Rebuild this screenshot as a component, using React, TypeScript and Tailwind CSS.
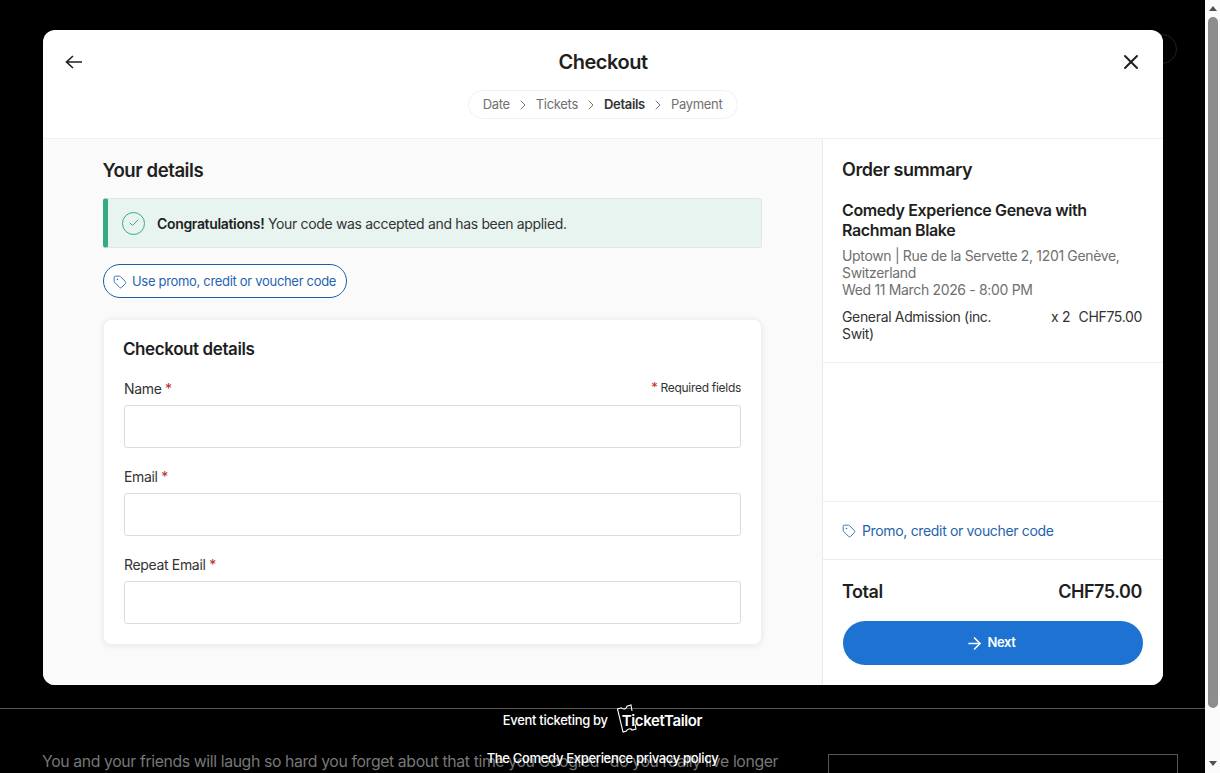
import React from "react";
import { ArrowRight, Check, ChevronRight, Tag, X } from "lucide-react";

const STEPS = ["Date", "Tickets", "Details", "Payment"];

function Field({ label, hint }: { label: string; hint?: boolean }) {
  return (
    <div>
      <div className="flex items-center justify-between h-[22px] mb-[6px]">
        <label className="text-[14px] text-[#333]">
          {label} <span className="text-[#c0272d]">*</span>
        </label>
        {hint && (
          <span className="text-[12px] text-[#333]">
            <span className="text-[13px] leading-none text-[#c0272d]">*</span> Required fields
          </span>
        )}
      </div>
      <input className="block w-full h-[43px] bg-white border border-[#dcdcdc] rounded-[3px]" />
    </div>
  );
}

function Background() {
  return (
    <div className="flex-1 min-w-0 relative overflow-hidden">
      <div className="absolute left-[1147px] top-[34px] size-[30px] rounded-full border border-[#222]" />
      <div className="mt-[708px] border-t border-[#555]" />
      <div className="flex pl-[42px] pr-[27px] pt-[44px] justify-between">
        <p className="text-[15.8px] leading-[18px] text-[#777] whitespace-nowrap">
          You and your friends will laugh so hard you forget about that time you Googled "do you really live longer
        </p>
        <div className="w-[350px] h-[60px] shrink-0 border border-[#555] mt-[1px]" />
      </div>
    </div>
  );
}

function Scrollbar() {
  return (
    <div className="w-[15px] shrink-0 bg-[#fbfbfb] flex flex-col items-center">
      <div className="h-[17px] flex items-center">
        <div className="size-0 border-x-[4px] border-x-transparent border-b-[5px] border-b-[#505050]" />
      </div>
      <div className="w-[10px] h-[691px] rounded-full bg-[#8d8d8d]" />
      <div className="flex-1 flex items-end pb-[7px]">
        <div className="size-0 border-x-[4px] border-x-transparent border-t-[5px] border-t-[#505050]" />
      </div>
    </div>
  );
}

function Header() {
  return (
    <div className="h-[109px] shrink-0 relative border-b border-[#f0f0f0] flex flex-col items-center pt-[19px]">
      <svg viewBox="0 0 18 14" className="absolute left-[22px] top-[25px] w-[18px] h-[14px] text-[#1f1f1f]" fill="none" stroke="currentColor" strokeWidth="1.6">
        <path d="M17 7H1.5M8 1L1.5 7L8 13" />
      </svg>
      <X className="absolute right-[20px] top-[20px] size-[24px] text-[#1f1f1f]" strokeWidth={1.9} />
      <h1 className="text-[20px] leading-[26px] font-semibold text-[#1f1f1f]">Checkout</h1>
      <div className="mt-[15px] h-[29px] pl-[14px] pr-[15px] flex items-center gap-[5px] rounded-full border border-[#f0f0f0]">
        {STEPS.map((s, i) => (
          <React.Fragment key={s}>
            {i > 0 && <ChevronRight className="size-[16px] text-[#777]" strokeWidth={1.5} />}
            <span className={s === "Details" ? "text-[13px] font-semibold text-[#333]" : "text-[13px] text-[#707070]"}>{s}</span>
          </React.Fragment>
        ))}
      </div>
    </div>
  );
}

function Details() {
  return (
    <div className="flex-1 min-w-0 bg-[#fafafa] pt-[19px] pl-[60px] pr-[60px]">
      <h2 className="text-[18.6px] leading-[25px] font-semibold text-[#1f1f1f] -ml-[0.5px]">Your details</h2>
      <div className="mt-[15px] h-[50px] flex items-center bg-[#e7f4ef] border border-[#dfe8e4] border-l-[5px] border-l-[#35ad84] rounded-[3px] pl-[14px]">
        <div className="size-[23px] rounded-full border-[1.5px] border-[#35ad84] flex items-center justify-center">
          <Check className="size-[12px] text-[#35ad84]" strokeWidth={2} />
        </div>
        <p className="ml-[12px] text-[14px] text-[#333]">
          <span className="font-semibold text-[#1f1f1f]">Congratulations!</span> Your code was accepted and has been applied.
        </p>
      </div>
      <button className="mt-[16px] h-[34px] pl-[9px] pr-[10px] pt-px flex items-center gap-[5px] rounded-full border border-[#1a5fa8] bg-white text-[13px] text-[#1f63b0]">
        <Tag className="size-[14px] text-[#1f63b0]" strokeWidth={1.5} />
        Use promo, credit or voucher code
      </button>
      <div className="mt-[21px] bg-white rounded-[8px] border border-[#f0f0f0] shadow-[0_1px_6px_rgba(0,0,0,0.08)] px-[20px] pt-[16px] pb-[20px]">
        <h3 className="text-[17px] leading-[26px] font-semibold text-[#1f1f1f] mb-[15px] -ml-px">Checkout details</h3>
        <div className="flex flex-col gap-[17px]">
          <Field label="Name" hint />
          <Field label="Email" />
          <Field label="Repeat Email" />
        </div>
      </div>
    </div>
  );
}

function Summary() {
  return (
    <div className="w-[341px] shrink-0 bg-white border-l border-[#eaeaea] flex flex-col">
      <div className="h-[224px] shrink-0 border-b border-[#f0f0f0] pl-[19px] pr-[21px] pt-[18px]">
        <h2 className="text-[18px] leading-[26px] font-semibold text-[#1f1f1f]">Order summary</h2>
        <h3 className="mt-[17px] text-[16px] leading-[20px] font-semibold text-[#1f1f1f]">
          Comedy Experience Geneva with Rachman Blake
        </h3>
        <p className="mt-[7px] text-[14px] leading-[17px] text-[#707070]">
          Uptown | Rue de la Servette 2, 1201 Genève, Switzerland
          <br />
          Wed 11 March 2026 - 8:00 PM
        </p>
        <div className="mt-[10px] flex text-[14px] leading-[17px] text-[#333]">
          <span className="w-[170px]">General Admission (inc. Swit)</span>
          <span className="ml-[39px]">x 2</span>
          <span className="ml-auto">CHF75.00</span>
        </div>
      </div>
      <div className="h-[139px] shrink-0 border-b border-[#f0f0f0]" />
      <div className="h-[58px] shrink-0 border-b border-[#ececec] px-[19px] flex items-center gap-[6px] text-[14px] text-[#1f63b0]">
        <Tag className="size-[14px]" strokeWidth={1.5} />
        Promo, credit or voucher code
      </div>
      <div className="flex-1 pl-[19px] pr-[21px] pt-[19px]">
        <div className="flex justify-between text-[18px] leading-[26px] font-semibold text-[#1f1f1f]">
          <span>Total</span>
          <span>CHF75.00</span>
        </div>
        <button className="mt-[16px] ml-px w-[300px] h-[44px] pr-[5px] rounded-full bg-[#1d72d2] text-white text-[13px] font-semibold flex items-center justify-center gap-[3px]">
          <ArrowRight className="size-[19px]" strokeWidth={2} />
          Next
        </button>
      </div>
    </div>
  );
}

function Footer() {
  return (
    <div className="absolute left-0 top-[709px] w-[1205px] flex flex-col items-center text-white text-[13px] font-medium">
      <div className="h-[24px] flex items-center gap-[9px]">
        <span>Event ticketing by</span>
        <span className="relative pl-[5px] text-[15px] font-semibold">
          <svg viewBox="0 0 20 29" className="absolute left-0 top-[-6px] w-[20px] h-[29px]" fill="none" stroke="white" strokeWidth="1.1">
            <path d="M15 7L14 1L10 2.2C9.5 5 6 6 4.5 3.8L0.5 5L6 28L9.5 27C10 25 14 24 15 26L19 25L18 20" />
          </svg>
          TicketTailor
        </span>
      </div>
      <span className="mt-[17px] leading-[16px]">The Comedy Experience privacy policy</span>
    </div>
  );
}

export default function App() {
  return (
    <div className="relative h-[773px] overflow-hidden flex bg-black font-['Inter',sans-serif] [&_*]:tracking-[-0.024em]">
      <Background />
      <Scrollbar />
      <div className="absolute left-[43px] top-[30px] w-[1120px] h-[655px] bg-white rounded-[12px] overflow-hidden flex flex-col">
        <Header />
        <div className="flex-1 min-h-0 flex">
          <Details />
          <Summary />
        </div>
      </div>
      <Footer />
    </div>
  );
}
